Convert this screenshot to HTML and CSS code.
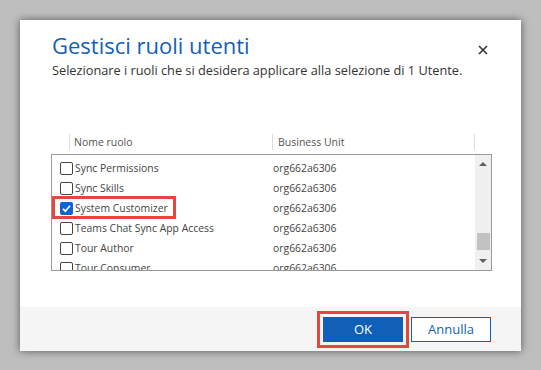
FILE: index.html
```html
<!DOCTYPE html>
<html lang="it">
<head>
    <meta charset="UTF-8">
    <title>Gestisci ruoli utenti</title>
    <link rel="stylesheet" href="styles.css">
</head>
<body>
    <div class="dialog">
        <div class="dialog-header">
            <div class="titles">
                <h1>Gestisci ruoli utenti</h1>
                <p class="subtitle">Selezionare i ruoli che si desidera applicare alla selezione di 1 Utente.</p>
            </div>
            <span class="close">
                <svg width="10" height="10" viewBox="0 0 10 10"><path d="M1 1 L9 9 M9 1 L1 9" stroke="#333" stroke-width="1.6" fill="none"/></svg>
            </span>
        </div>

        <div class="grid">
            <div class="grid-head">
                <div class="col-check"></div>
                <div class="col-name">Nome ruolo</div>
                <div class="col-bu">Business Unit</div>
                <div class="col-end"></div>
            </div>
            <div class="list">
                <div class="rows">
                    <div class="row">
                        <div class="cell-name"><span class="checkbox"></span>Sync Permissions</div>
                        <div class="cell-bu">org662a6306</div>
                    </div>
                    <div class="row">
                        <div class="cell-name"><span class="checkbox"></span>Sync Skills</div>
                        <div class="cell-bu">org662a6306</div>
                    </div>
                    <div class="row highlighted">
                        <div class="cell-name"><span class="checkbox checked">
                            <svg width="13" height="13" viewBox="0 0 13 13"><path d="M3 6.8 L5.3 9.2 L10 3.8" stroke="#fff" stroke-width="1.7" fill="none"/></svg>
                        </span>System Customizer</div>
                        <div class="cell-bu">org662a6306</div>
                        <span class="mark"></span>
                    </div>
                    <div class="row">
                        <div class="cell-name"><span class="checkbox"></span>Teams Chat Sync App Access</div>
                        <div class="cell-bu">org662a6306</div>
                    </div>
                    <div class="row">
                        <div class="cell-name"><span class="checkbox"></span>Tour Author</div>
                        <div class="cell-bu">org662a6306</div>
                    </div>
                    <div class="row">
                        <div class="cell-name"><span class="checkbox"></span>Tour Consumer</div>
                        <div class="cell-bu">org662a6306</div>
                    </div>
                </div>
                <div class="scrollbar">
                    <span class="arrow up"></span>
                    <div class="track"><span class="thumb"></span></div>
                    <span class="arrow down"></span>
                </div>
            </div>
        </div>

        <div class="dialog-footer">
            <button class="btn primary">OK</button>
            <button class="btn secondary">Annulla</button>
        </div>
    </div>
</body>
</html>
```

FILE: styles.css
```css
body {
    margin: 0;
    background: #bebebe;
    font-family: 'Open Sans', sans-serif;
    color: #333;
    padding: 20px;
}
.dialog {
    width: 501px;
    height: 331px;
    background: #fff;
    box-shadow: 0 0 8px rgba(0, 0, 0, 0.55);
    display: flex;
    flex-direction: column;
}
.dialog-header {
    display: flex;
    justify-content: space-between;
    padding: 9px 33px 0 32px;
}
h1 {
    margin: 0;
    font-size: 22px;
    font-weight: 400;
    line-height: 32px;
    color: #1360b8;
}
.subtitle {
    margin: 0;
    font-size: 12.75px;
    line-height: 18px;
    color: #333;
}
.close {
    margin-top: 16px;
    width: 10px;
    height: 10px;
    display: flex;
}
.grid {
    margin: 55px 0 0 31px;
    width: 441px;
}
.grid-head {
    display: flex;
    height: 16px;
    font-size: 10.5px;
    line-height: 16px;
    color: #555;
    margin-bottom: 4px;
}
.col-check {
    width: 18px;
}
.col-name,
.col-bu,
.col-end {
    border-left: 1px solid #ddd;
}
.col-name {
    width: 198px;
    padding-left: 4px;
}
.col-bu {
    width: 196px;
    padding-left: 5px;
}
.list {
    display: flex;
    height: 115px;
    border: 1px solid #999;
    overflow: hidden;
}
.rows {
    flex: 1;
    padding-top: 3px;
}
.row {
    display: flex;
    height: 20px;
    align-items: center;
    font-size: 10.4px;
    color: #444;
    position: relative;
}
.cell-name {
    width: 212px;
    padding-left: 8px;
    display: flex;
    align-items: center;
}
.cell-bu {
    padding-left: 1px;
}
.checkbox {
    width: 11px;
    height: 11px;
    border: 1px solid #444;
    border-radius: 2px;
    margin-right: 2px;
    display: flex;
}
.checkbox.checked {
    width: 13px;
    height: 13px;
    border: none;
    background: #0f62d6;
}
.mark {
    position: absolute;
    left: 0;
    top: -2px;
    width: 124px;
    height: 23px;
    border: 3px solid #e5473f;
    box-sizing: border-box;
}
.scrollbar {
    width: 16px;
    background: #f0f0f0;
    display: flex;
    flex-direction: column;
    align-items: center;
}
.arrow {
    width: 0;
    height: 0;
    border-left: 4px solid transparent;
    border-right: 4px solid transparent;
}
.arrow.up {
    margin-top: 7px;
    border-bottom: 4px solid #606060;
}
.arrow.down {
    margin-bottom: 7px;
    border-top: 4px solid #606060;
}
.track {
    flex: 1;
    width: 100%;
    display: flex;
    flex-direction: column;
    justify-content: flex-end;
    padding-bottom: 9px;
}
.thumb {
    margin: 0 1px 0 2px;
    height: 17px;
    background: #c2c2c2;
}
.dialog-footer {
    margin-top: auto;
    height: 44px;
    background: #f5f5f5;
    display: flex;
    justify-content: flex-end;
    align-items: center;
    gap: 8px;
    padding-right: 30px;
}
.btn {
    width: 80px;
    height: 25px;
    font-family: 'Open Sans', sans-serif;
    font-size: 13px;
    border: 1px solid #1160b7;
    padding: 0;
}
.primary {
    background: #1160b7;
    color: #fff;
    outline: 3px solid #e5473f;
    outline-offset: 3px;
}
.secondary {
    background: #fff;
    color: #1160b7;
}
```
